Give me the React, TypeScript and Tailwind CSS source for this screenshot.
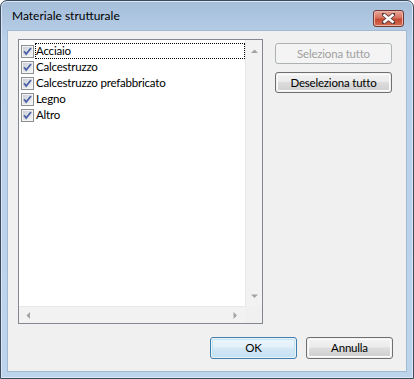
import React from 'react'

const items = ['Acciaio', 'Calcestruzzo', 'Calcestruzzo prefabbricato', 'Legno', 'Altro']

const font = { fontFamily: '"Segoe UI", Lato, "Noto Sans", sans-serif' }

const CheckBox: React.FC = () => (
  <svg width="13" height="13" viewBox="0 0 13 13" className="shrink-0">
    <defs>
      <linearGradient id="cbg" x1="0" y1="0" x2="1" y2="1">
        <stop offset="0" stopColor="#cbcfd5" />
        <stop offset="1" stopColor="#f4f5f7" />
      </linearGradient>
    </defs>
    <rect x="0.5" y="0.5" width="12" height="12" fill="#f4f4f4" stroke="#8e8f8f" />
    <rect x="2" y="2" width="9" height="9" fill="url(#cbg)" />
    <path d="M3 6.2 L5.2 9 L10 3" fill="none" stroke="#4c61a8" strokeWidth="1.8" />
  </svg>
)

const Tri: React.FC<{ dir: 'up' | 'down' | 'left' | 'right' }> = ({ dir }) => {
  const d = {
    up: 'M0 4 L3.5 0.5 L7 4 Z',
    down: 'M0 0.5 L3.5 4 L7 0.5 Z',
    left: 'M4 0 L0.5 3.5 L4 7 Z',
    right: 'M0.5 0 L4 3.5 L0.5 7 Z',
  }[dir]
  const vert = dir === 'up' || dir === 'down'
  return (
    <svg width={vert ? 7 : 5} height={vert ? 5 : 7} viewBox={vert ? '0 0 7 5' : '0 0 5 7'}>
      <path d={d} fill="#a3a3a3" />
    </svg>
  )
}

const WinButton: React.FC<{ label: string; disabled?: boolean; def?: boolean; className?: string }> = ({
  label,
  disabled,
  def,
  className,
}) => {
  if (disabled) {
    return (
      <div
        className={`flex items-center justify-center rounded-[3px] border border-[#adb2b5] bg-[#f4f4f4] text-[11.5px] tracking-[-0.2px] text-[#a0a0a0] ${className}`}
      >
        {label}
      </div>
    )
  }
  return (
    <div
      className={`rounded-[3px] border p-px ${def ? 'border-[#3c7fb1]' : 'border-[#707070]'} ${className}`}
    >
      <div
        className={`flex h-full items-center justify-center rounded-[2px] text-[11.5px] tracking-[-0.2px] text-black ${
          def
            ? 'bg-[linear-gradient(to_bottom,#eaf6fd_0%,#e4f1fa_45%,#d4e8f5_50%,#c6e1f3_100%)] shadow-[inset_0_0_0_1px_#bfe6f8]'
            : 'bg-[linear-gradient(to_bottom,#f2f2f2_0%,#ebebeb_45%,#dddddd_50%,#cfcfcf_100%)] shadow-[inset_0_0_0_1px_#fcfcfc]'
        }`}
      >
        {label}
      </div>
    </div>
  )
}

export default function App() {
  return (
    <div className="h-[379px] w-[414px] bg-white" style={font}>
      <div className="flex h-full w-full flex-col rounded-t-[7px] border border-[#3b4a5c] bg-[linear-gradient(to_bottom,#a4bdd8_0px,#b9d1ea_40px,#bcd4ec_100%)] shadow-[inset_0_0_0_1px_#dbe7f4]">
        <div className="flex h-[29px] shrink-0 items-center justify-between pl-[11px] pr-[9px]">
          <span className="mt-[1px] text-[12px] text-black">Materiale strutturale</span>
          <div className="mt-[9px] flex h-[17px] w-[31px] items-center justify-center self-start rounded-[3px] border border-[#6d3a37] bg-[linear-gradient(to_bottom,#e9a99b_0%,#d7725f_45%,#c24a31_55%,#d66c55_100%)] shadow-[inset_0_0_0_1px_#efb2a5]">
            <svg width="13" height="11" viewBox="0 0 13 11">
              <path
                d="M1 1 L12 10 M12 1 L1 10"
                stroke="#5a3c3a"
                strokeWidth="4"
                strokeLinecap="square"
              />
              <path d="M1.5 1.5 L11.5 9.5 M11.5 1.5 L1.5 9.5" stroke="#ffffff" strokeWidth="2.4" />
            </svg>
          </div>
        </div>
        <div className="mx-[6px] mb-[6px] flex flex-1 flex-col border border-[#a2b9d2] bg-[#f0f0f0] pl-[10px] pr-[13px] pt-[8px]">
          <div className="flex">
            <div className="flex h-[285px] w-[245px] flex-col border border-[#828790] bg-white">
              <div className="flex min-h-0 flex-1">
                <div className="flex-1 pl-[2px] pt-[3px]">
                  {items.map((it, i) => (
                    <div key={it} className="flex h-[16px] items-center">
                      <CheckBox />
                      <span
                        className={`ml-[1px] flex h-[16px] items-center pl-px text-[11.5px] leading-none tracking-[-0.2px] text-black ${
                          i === 0 ? 'flex-1 outline outline-1 outline-dotted outline-black -outline-offset-1' : ''
                        }`}
                      >
                        {it}
                      </span>
                    </div>
                  ))}
                </div>
                <div className="flex w-[17px] flex-col items-center justify-between border-l border-[#e8e8e8] bg-[#f2f2f2] pb-[7px] pt-[9px]">
                  <Tri dir="up" />
                  <Tri dir="down" />
                </div>
              </div>
              <div className="flex h-[17px] shrink-0">
                <div className="flex flex-1 items-center justify-between border-t border-[#e8e8e8] bg-[#f2f2f2] pl-[7px] pr-[7px]">
                  <Tri dir="left" />
                  <Tri dir="right" />
                </div>
                <div className="w-[17px] bg-[#f0f0f0]" />
              </div>
            </div>
            <div className="ml-[12px] mt-[4px] flex flex-col gap-[8px]">
              <WinButton label="Seleziona tutto" disabled className="h-[21px] w-[117px]" />
              <WinButton label="Deseleziona tutto" className="h-[21px] w-[117px]" />
            </div>
          </div>
          <div className="mt-[13px] flex justify-end gap-[9px]">
            <WinButton label="OK" def className="h-[22px] w-[87px]" />
            <WinButton label="Annulla" className="h-[22px] w-[87px]" />
          </div>
        </div>
      </div>
    </div>
  )
}
